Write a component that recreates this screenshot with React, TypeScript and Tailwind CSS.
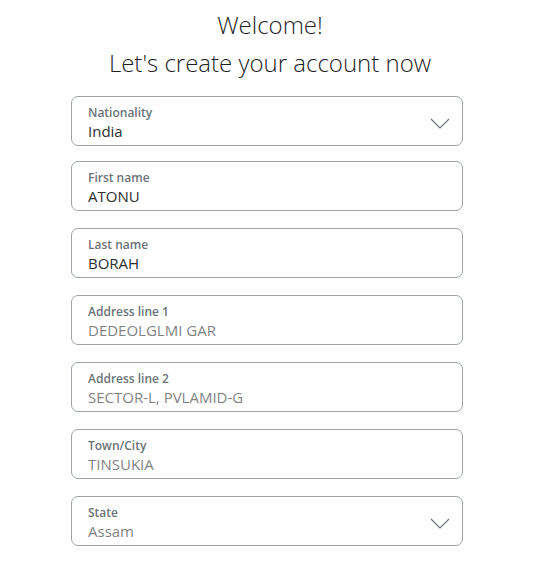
import React from "react";

interface Field {
  label: string;
  value: string;
  select?: boolean;
  masked?: boolean;
}

const fields: Field[] = [
  { label: "Nationality", value: "India", select: true },
  { label: "First name", value: "ATONU" },
  { label: "Last name", value: "BORAH" },
  { label: "Address line 1", value: "DEDEOLGLMI GAR", masked: true },
  { label: "Address line 2", value: "SECTOR-L, PVLAMID-G", masked: true },
  { label: "Town/City", value: "TINSUKIA", masked: true },
  { label: "State", value: "Assam", select: true, masked: true },
];

function Chevron() {
  return (
    <svg width="20" height="11" viewBox="0 0 20 11" fill="none" className="shrink-0">
      <path d="M1 1l9 9 9-9" stroke="#6c7378" strokeWidth="1.2" />
    </svg>
  );
}

export default function App() {
  return (
    <div className="w-[540px] h-[570px] bg-white font-['Open_Sans',sans-serif] text-[#2c2e2f]">
      {/* Heading */}
      <div className="pt-[6px] text-center font-light text-[24px] leading-[38px] text-[#1f1f1f]">
        <h1>Welcome!</h1>
        <h2>Let's create your account now</h2>
      </div>

      {/* Form fields */}
      <div className="mt-[14px] ml-[71px] w-[392px] flex flex-col gap-[17px]">
        {fields.map((f, i) => (
          <div
            key={f.label}
            className={`h-[50px] rounded-[7px] border border-[#9da3a6] pl-[16px] pr-[12px] flex items-center ${i === 0 ? "mb-[-2px]" : ""}`}
          >
            <div className="flex-1 flex flex-col mt-[3px]">
              <span className="text-[12px] leading-[16px] font-semibold text-[#6c7378]">{f.label}</span>
              <span
                className={`text-[15px] leading-[20px] ${f.masked ? "text-[#2c2e2f] opacity-60" : ""}`}
              >
                {f.value}
              </span>
            </div>
            {f.select && (
              <div className="mt-[4px]">
                <Chevron />
              </div>
            )}
          </div>
        ))}
      </div>
    </div>
  );
}
